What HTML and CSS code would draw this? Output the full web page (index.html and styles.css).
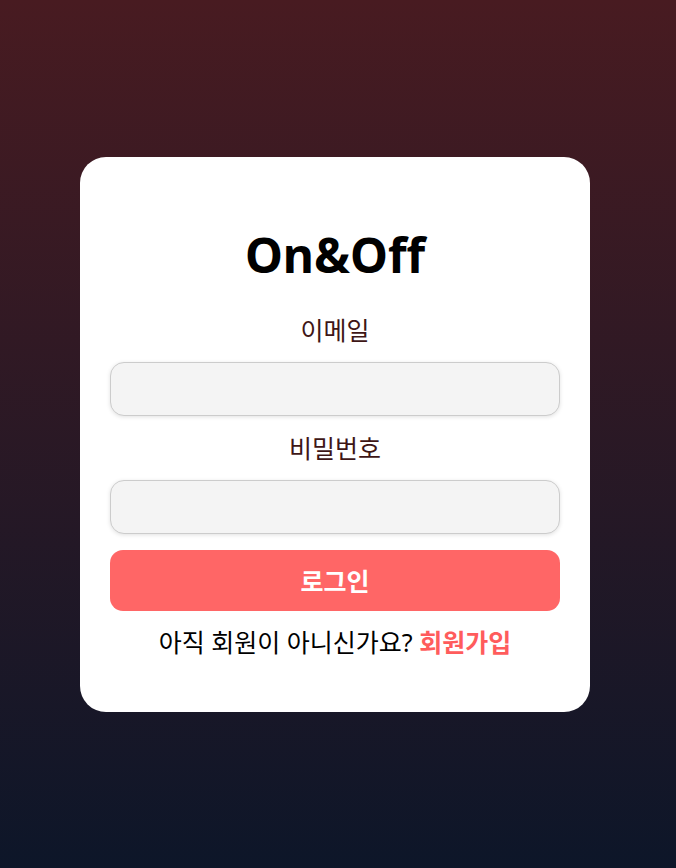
FILE: index.html
```html
<!DOCTYPE html>
<html lang="ko">
<head>
  <meta charset="UTF-8" />
  <meta name="viewport" content="width=device-width, initial-scale=1.0"/>
  <title>On&amp;Off 로그인</title>
  <link rel="stylesheet" href="styles.css">
</head>
<body>
  <div class="login-card">
    <h1>On&amp;Off</h1>
    <form id="loginForm" class="login-form">
      <label for="email">이메일</label>
      <input type="email" id="email" />

      <label for="password">비밀번호</label>
      <input type="password" id="password" />

      <button type="submit">로그인</button>
    </form>
    <p class="signup">아직 회원이 아니신가요? <a href="#">회원가입</a></p>
  </div>
</body>
</html>
```

FILE: styles.css
```css
html, body {
  height: 100%;
}
body {
  margin: 0;
  font-family: "Noto Sans", "Noto Sans CJK KR", sans-serif;
  background: linear-gradient(to bottom, #481b21, #0d1629);
  display: flex;
  align-items: center;
  justify-content: center;
}
.login-card {
  width: 510px;
  box-sizing: border-box;
  margin-right: 6px;
  background: white;
  border-radius: 26px;
  padding: 69px 30px 52px;
  text-align: center;
}
h1 {
  margin: 0 0 28px;
  font-size: 48px;
  line-height: 58px;
  font-weight: 700;
  color: #000;
}
.login-form {
  display: flex;
  flex-direction: column;
  gap: 14px;
}
label {
  display: block;
  font-size: 25px;
  line-height: 36px;
  color: #3e1616;
}
input {
  height: 54px;
  box-sizing: border-box;
  width: 100%;
  padding: 10px 14px;
  border: 1px solid #ccc;
  border-radius: 14px;
  background: #f4f4f4;
  box-shadow: 0 1px 4px rgba(0,0,0,0.12);
  font-size: 18px;
}
button {
  height: 61px;
  margin-top: 2px;
  border: none;
  border-radius: 13px;
  background: #ff6666;
  color: white;
  font-family: "Noto Sans CJK KR", sans-serif;
  font-size: 25px;
  font-weight: 700;
  cursor: pointer;
}
.signup {
  margin: 13px 0 0;
  font-size: 25px;
  line-height: 36px;
  color: #000;
}
.signup a {
  color: #ff5c5c;
  font-weight: 700;
  text-decoration: none;
}
```
